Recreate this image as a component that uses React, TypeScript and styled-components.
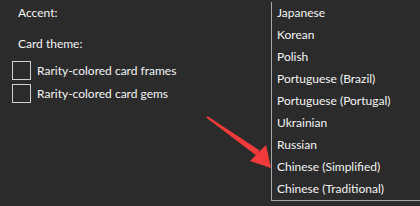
import React from "react";
import styled, { createGlobalStyle } from "styled-components";

const Global = createGlobalStyle`
  html, body { margin: 0; padding: 0; background: #2b2b2b; }
  body { width: 420px; height: 206px; overflow: hidden; font-family: "Lato", "Noto Sans", sans-serif; }
`;

const Page = styled.div`
  position: relative;
  width: 420px;
  height: 206px;
  background: #2b2b2b;
  color: #f4f4f4;
  font-size: 12px;
`;

const Settings = styled.div`
  display: flex;
  flex-direction: column;
  padding: 4px 0 0 18px;
`;

const Label = styled.div<{ $gap?: number }>`
  height: 18px;
  line-height: 18px;
  margin-top: ${(p) => p.$gap ?? 0}px;
`;

const CheckList = styled.div`
  display: flex;
  flex-direction: column;
  gap: 4px;
  margin: 8px 0 0 -6px;
`;

const CheckRow = styled.label`
  display: flex;
  align-items: center;
  gap: 6px;
  height: 19px;
`;

const Box = styled.span`
  width: 17px;
  height: 17px;
  border: 1px solid #d0d0d0;
  box-sizing: content-box;
`;

const Menu = styled.ul`
  position: absolute;
  left: 271px;
  top: 2px;
  width: 160px;
  margin: 0;
  padding: 0;
  list-style: none;
  background: #2b2b2b;
  border-left: 1px solid #a8a8a8;
  border-bottom: 1px solid #a8a8a8;
`;

const Item = styled.li`
  height: 22px;
  line-height: 22px;
  padding-left: 5px;
  white-space: nowrap;
`;

const Arrow = styled.svg`
  position: absolute;
  left: 200px;
  top: 110px;
`;

const languages = [
  "Japanese",
  "Korean",
  "Polish",
  "Portuguese (Brazil)",
  "Portuguese (Portugal)",
  "Ukrainian",
  "Russian",
  "Chinese (Simplified)",
  "Chinese (Traditional)",
];

export default function App() {
  return (
    <Page>
      <Global />
      <Settings>
        <Label>Accent:</Label>
        <Label $gap={13}>Card theme:</Label>
        <CheckList>
          <CheckRow>
            <Box />
            Rarity-colored card frames
          </CheckRow>
          <CheckRow>
            <Box />
            Rarity-colored card gems
          </CheckRow>
        </CheckList>
      </Settings>
      <Menu>
        {languages.map((l) => (
          <Item key={l}>{l}</Item>
        ))}
      </Menu>
      <Arrow width="72" height="60" viewBox="0 0 72 60">
        <polygon points="6.4,7.8 7.6,6.2 59.7,40.5 56.3,45.5" fill="#f23a3a" />
        <polygon points="50,51 66,35 71,58" fill="#f23a3a" />
      </Arrow>
    </Page>
  );
}
